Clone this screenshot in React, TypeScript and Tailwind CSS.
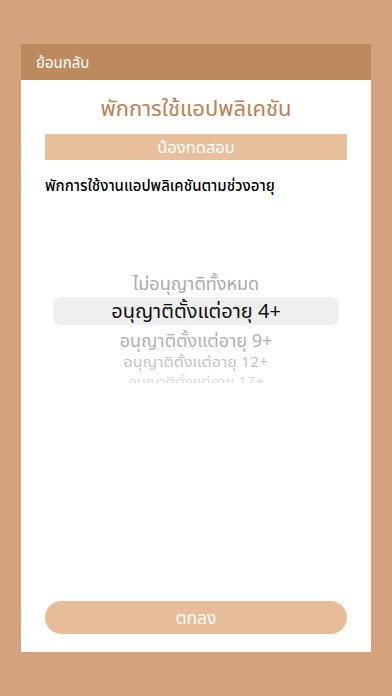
export default function App() {
  const font = { fontFamily: '"Noto Sans", "Noto Sans Thai", "Liberation Sans", sans-serif' };
  return (
    <div className="w-[392px] h-[696px] bg-[#d4a27c] pt-[44px] px-[21px]" style={font}>
      <div className="w-[350px] h-[608px] flex flex-col bg-white">
        <div className="h-[36px] bg-[#bd8a5e] flex items-center pl-[15px] text-white text-[15px]">ย้อนกลับ</div>
        <div className="flex-1 flex flex-col px-[24px]">
          <div className="h-[54px] flex items-center justify-center text-[22px] text-[#bb8154]">พักการใช้แอปพลิเคชัน</div>
          <div className="h-[26px] bg-[#e7bf9b] flex items-center justify-center text-white text-[16.5px]">น้องทดสอบ</div>
          <div className="mt-[14px] text-[15px] font-medium text-black leading-[22px]">พักการใช้งานแอปพลิเคชันตามช่วงอายุ</div>
          <div className="mt-[75px] flex flex-col items-center overflow-hidden h-[112px]">
            <div className="h-[24px] flex items-center justify-center text-[18px] text-[#aaaaaa]">ไม่อนุญาติทั้งหมด</div>
            <div className="mt-[2px] w-[286px] h-[28px] rounded-[8px] bg-[#efefef] flex items-center justify-center text-[20px] text-[#111]">อนุญาติตั้งแต่อายุ 4+</div>
            <div className="mt-[3px] h-[24px] flex items-center justify-center text-[18px] text-[#b0b0b0]">อนุญาติตั้งแต่อายุ 9+</div>
            <div className="h-[20px] flex items-center justify-center text-[16px] text-[#c4c4c4] scale-y-[0.9]">อนุญาติตั้งแต่อายุ 12+</div>
            <div className="h-[16px] flex items-center justify-center text-[15px] text-[#dadada] scale-y-[0.75]">อนุญาติตั้งแต่อายุ 17+</div>
          </div>
          <div className="flex-1" />
          <div className="h-[33px] mb-[18px] rounded-full bg-[#e6bd98] flex items-center justify-center text-white text-[17.5px]">ตกลง</div>
        </div>
      </div>
    </div>
  );
}
